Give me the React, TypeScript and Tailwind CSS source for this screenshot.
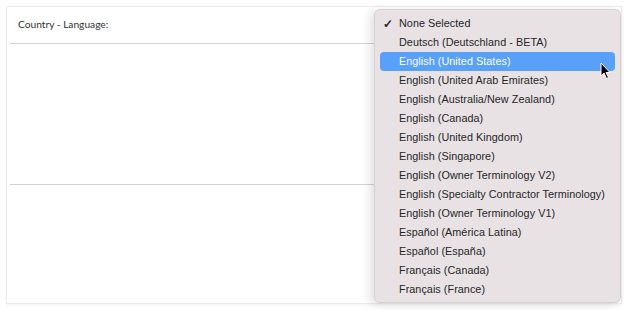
import React from "react";

const items = [
  "None Selected",
  "Deutsch (Deutschland - BETA)",
  "English (United States)",
  "English (United Arab Emirates)",
  "English (Australia/New Zealand)",
  "English (Canada)",
  "English (United Kingdom)",
  "English (Singapore)",
  "English (Owner Terminology V2)",
  "English (Specialty Contractor Terminology)",
  "English (Owner Terminology V1)",
  "Español (América Latina)",
  "Español (España)",
  "Français (Canada)",
  "Français (France)",
];

export default function App() {
  return (
    <div className="relative w-[628px] h-[310px] bg-white overflow-hidden">
      <div className="absolute left-[6px] top-[6px] w-[616px] h-[298px] border border-[#ececec] bg-white shadow-[0_1px_3px_rgba(0,0,0,0.06)] flex flex-col">
        <div className="h-[37px] mx-[3px] border-b border-[#d4d4d4] flex items-center pl-[8px]">
          <span className="text-[10.2px] text-[#333] font-['Lato',sans-serif]">Country - Language:</span>
        </div>
        <div className="h-[141px] mx-[3px] border-b border-[#d4d4d4]" />
        <div className="flex-1" />
      </div>

      <div className="absolute left-[374px] top-[9px] w-[247px] h-[294px] rounded-[6px] bg-[#e8e2e5] border border-[#d6d2d4] shadow-[-4px_2px_10px_rgba(0,0,0,0.12)] pt-[4px] px-[5px] font-['Liberation_Sans',sans-serif]">
        {items.map((it, i) => {
          const hl = i === 2;
          return (
            <div
              key={it}
              className={`h-[19px] flex items-center rounded-[4px] text-[10.8px] ${hl ? "bg-[#58a0f8] text-white" : "text-[#262626]"}`}
            >
              <span className="w-[19px] pl-[3px] text-[12px] leading-none font-bold">{i === 0 ? "✓" : ""}</span>
              <span className="tracking-[0.05px]">{it}</span>
            </div>
          );
        })}
      </div>

      <svg className="absolute left-[600px] top-[62px]" width="12" height="18" viewBox="0 0 12 18">
        <path d="M1 1 L1 14 L4 11 L6.5 16.5 L8.5 15.5 L6 10.5 L10 10.5 Z" fill="#000" stroke="#fff" strokeWidth="1" strokeLinejoin="round" />
      </svg>
    </div>
  );
}
